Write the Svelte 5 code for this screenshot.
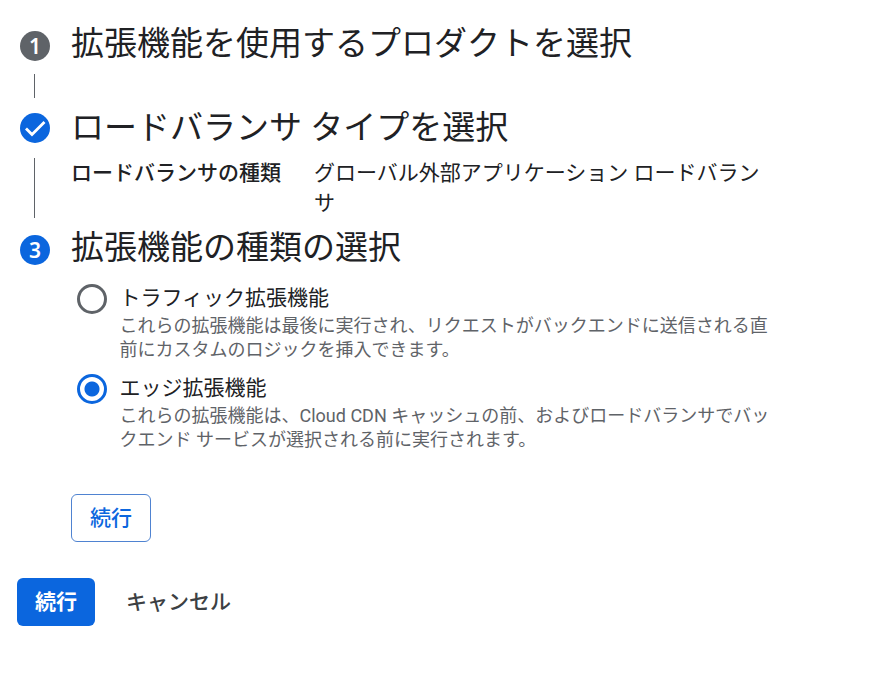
<script>
  let selected = $state('edge');

  const options = [
    {
      id: 'traffic',
      title: 'トラフィック拡張機能',
      lines: [
        'これらの拡張機能は最後に実行され、リクエストがバックエンドに送信される直',
        '前にカスタムのロジックを挿入できます。',
      ],
    },
    {
      id: 'edge',
      title: 'エッジ拡張機能',
      lines: [
        'これらの拡張機能は、Cloud CDN キャッシュの前、およびロードバランサでバッ',
        'クエンド サービスが選択される前に実行されます。',
      ],
    },
  ];
</script>

<main>
  <section class="step first">
    <div class="rail">
      <span class="badge grey">1</span>
      <span class="line"></span>
    </div>
    <h2>拡張機能を使用するプロダクトを選択</h2>
  </section>

  <section class="step second">
    <div class="rail">
      <span class="badge">
        <svg viewBox="0 0 30 30" width="30" height="30" aria-hidden="true">
          <path d="M6 15.500l6 6L24.500 9" fill="none" stroke="#fff" stroke-width="2.800" />
        </svg>
      </span>
      <span class="line"></span>
    </div>
    <div class="body">
      <h2>ロードバランサ タイプを選択</h2>
      <dl>
        <dt>ロードバランサの種類</dt>
        <dd>グローバル外部アプリケーション ロードバラン<br />サ</dd>
      </dl>
    </div>
  </section>

  <section class="step third">
    <div class="rail">
      <span class="badge">3</span>
    </div>
    <div class="body">
      <h2>拡張機能の種類の選択</h2>
      <div class="options" role="radiogroup">
        {#each options as option (option.id)}
          <button
            class="option"
            role="radio"
            aria-checked={selected === option.id}
            onclick={() => (selected = option.id)}
          >
            <span class="radio" class:checked={selected === option.id}></span>
            <span class="text">
              <span class="title">{option.title}</span>
              {#each option.lines as line}
                <span class="desc">{line}</span>
              {/each}
            </span>
          </button>
        {/each}
      </div>
      <button class="btn outlined">続行</button>
    </div>
  </section>

  <footer>
    <button class="btn filled">続行</button>
    <button class="btn plain">キャンセル</button>
  </footer>
</main>

<style>
  :global(body) {
    background: #fff;
  }

  main {
    box-sizing: border-box;
    width: 873px;
    height: 680px;
    padding: 20px 0 0 17px;
    overflow: hidden;
    font-family: Roboto, 'Noto Sans CJK JP', sans-serif;
    color: #202124;
  }

  button {
    margin: 0;
    padding: 0;
    border: 0;
    background: none;
    font-family: inherit;
    color: inherit;
    cursor: pointer;
  }

  .step {
    display: flex;
  }

  .first {
    height: 84px;
  }

  .second {
    height: 120px;
  }

  .third {
    height: 354px;
  }

  .rail {
    display: flex;
    flex: none;
    flex-direction: column;
    width: 33px;
    margin-right: 18px;
    padding: 11px 0 0 3px;
  }

  .second .rail {
    padding-top: 9px;
  }

  .badge {
    display: flex;
    flex: none;
    align-items: center;
    justify-content: center;
    width: 30px;
    height: 30px;
    border-radius: 50%;
    background: #0b66de;
    color: #fff;
    font-family: 'Noto Sans', sans-serif;
    font-size: 21px;
    font-weight: 600;
    line-height: 30px;
  }

  .badge.grey {
    background: #5f6368;
  }

  .line {
    width: 1px;
    margin: 13px 0 0 14px;
    background: #5f6368;
  }

  .first .line {
    height: 24px;
  }

  .second .line {
    height: 60px;
    margin-top: 15px;
  }

  h2 {
    margin: 0;
    padding-top: 1px;
    font-size: 33px;
    font-weight: 400;
    line-height: 46px;
    white-space: nowrap;
  }

  dl {
    display: flex;
    margin: 7px 0 0;
    font-size: 21px;
    line-height: 30px;
  }

  dt {
    width: 243px;
    font-weight: 500;
  }

  dd {
    margin: 0;
    white-space: nowrap;
  }

  .options {
    display: flex;
    flex-direction: column;
    gap: 12px;
    margin: 13px 0 0 6px;
  }

  .option {
    display: flex;
    height: 78px;
    text-align: left;
  }

  .radio {
    box-sizing: border-box;
    flex: none;
    width: 30px;
    height: 30px;
    margin-right: 12.5px;
    border: 3px solid #5f6368;
    border-radius: 50%;
  }

  .radio.checked {
    border-color: #0b66de;
    background: radial-gradient(circle, #0b66de 7px, transparent 8px);
  }

  .title,
  .desc {
    display: block;
    white-space: nowrap;
  }

  .title {
    padding-bottom: 2px;
    font-size: 21px;
    line-height: 28px;
  }

  .desc {
    color: #5f6368;
    font-size: 18px;
    line-height: 24px;
  }

  .btn {
    box-sizing: border-box;
    height: 48px;
    padding-bottom: 1px;
    border-radius: 6px;
    font-size: 21px;
    font-weight: 500;
    line-height: 30px;
  }

  .outlined {
    width: 80px;
    margin-top: 42px;
    border: 1px solid #4f83d1;
    color: #0b66de;
  }

  footer {
    display: flex;
    gap: 31px;
  }

  .filled {
    width: 78px;
    background: #0b66de;
    color: #fff;
    font-weight: 700;
  }

  .plain {
    color: #3c4043;
  }
</style>
